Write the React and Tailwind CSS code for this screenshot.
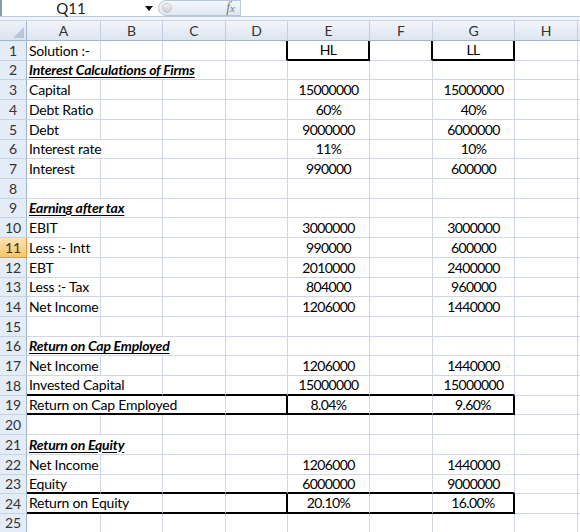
import React from 'react';

const COL_LETTERS = ['A', 'B', 'C', 'D', 'E', 'F', 'G', 'H', ''];
const COL_W = ['w-[74px]', 'w-[62px]', 'w-[63px]', 'w-[62px]', 'w-[82px]', 'w-[63px]', 'w-[82px]', 'w-[63px]', 'w-[63px]'];
const SPAN_W = { 1: 'w-[74px]', 2: 'w-[136px]', 3: 'w-[199px]' };
const ROW_H = [
  'h-[20px]', 'h-[19px]', 'h-[20px]', 'h-[20px]', 'h-[20px]', 'h-[19px]', 'h-[20px]', 'h-[20px]',
  'h-[19px]', 'h-[20px]', 'h-[20px]', 'h-[20px]', 'h-[19px]', 'h-[20px]', 'h-[20px]', 'h-[19px]',
  'h-[20px]', 'h-[20px]', 'h-[19px]', 'h-[20px]', 'h-[20px]', 'h-[20px]', 'h-[19px]', 'h-[20px]',
  'h-[19px]',
];

const rows = [
  { a: 'Solution :-', e: 'HL', g: 'LL' },
  { a: 'Interest Calculations of Firms', head: true, span: 3 },
  { a: 'Capital', e: '15000000', g: '15000000' },
  { a: 'Debt Ratio', e: '60%', g: '40%' },
  { a: 'Debt', e: '9000000', g: '6000000' },
  { a: 'Interest rate', e: '11%', g: '10%', span: 2 },
  { a: 'Interest', e: '990000', g: '600000' },
  {},
  { a: 'Earning after tax', head: true, span: 2 },
  { a: 'EBIT', e: '3000000', g: '3000000' },
  { a: 'Less :- Intt', e: '990000', g: '600000' },
  { a: 'EBT', e: '2010000', g: '2400000' },
  { a: 'Less :- Tax', e: '804000', g: '960000' },
  { a: 'Net Income', e: '1206000', g: '1440000' },
  {},
  { a: 'Return on Cap Employed', head: true, span: 3 },
  { a: 'Net Income', e: '1206000', g: '1440000' },
  { a: 'Invested Capital', e: '15000000', g: '15000000', span: 2 },
  { a: 'Return on Cap Employed', e: '8.04%', g: '9.60%', span: 3 },
  {},
  { a: 'Return on Equity', head: true, span: 2 },
  { a: 'Net Income', e: '1206000', g: '1440000' },
  { a: 'Equity', e: '6000000', g: '9000000' },
  { a: 'Return on Equity', e: '20.10%', g: '16.00%', span: 2 },
  {},
];

// thick lines of the boxed result rows
const thickBottom = (r, c) => {
  if ([18, 19, 23, 24].includes(r) && c <= 6) return true;
  if (r === 1 && (c === 4 || c === 6)) return true;
  return false;
};
const thickRight = (r, c) => {
  if ((r === 19 || r === 24) && (c === 3 || c === 6)) return true;
  if (r === 1 && c >= 3 && c <= 6) return true;
  return false;
};

const Cell = ({ w, r, c, children, center, head }) => (
  <div
    className={[
      'shrink-0 flex items-center whitespace-nowrap overflow-hidden',
      w,
      thickRight(r, c) ? 'border-r-2 border-r-black' : 'border-r border-r-[#d0d7e5]',
      thickBottom(r, c) ? 'border-b-2 border-b-black' : 'border-b border-b-[#d0d7e5]',
      center ? 'justify-center' : 'pl-[2px] tracking-[-0.2px]',
      head ? 'font-bold italic underline underline-offset-[2px]' : '',
    ].join(' ')}
  >
    {children}
  </div>
);

const Row = ({ data, r }) => {
  const span = data.span || 1;
  const cells = [];
  cells.push(
    <Cell key="a" w={SPAN_W[span]} r={r} c={span - 1} head={data.head}>
      {data.a}
    </Cell>
  );
  for (let c = span; c < COL_W.length; c++) {
    let v = null;
    if (c === 4) v = data.e;
    if (c === 6) v = data.g;
    cells.push(
      <Cell key={c} w={COL_W[c]} r={r} c={c} center>
        {v && <span className="tracking-[-0.6px]">{v}</span>}
      </Cell>
    );
  }
  const active = r === 11;
  return (
    <div className={`flex ${ROW_H[r - 1]}`}>
      <div
        className={
          active
            ? 'shrink-0 w-[27px] flex items-center justify-center bg-linear-to-b from-[#fbe3b3] to-[#f7c766] border-r border-r-[#f29436] border-b border-b-[#f29436] text-[#333]'
            : 'shrink-0 w-[27px] flex items-center justify-center bg-[#e4ecf7] border-r border-r-[#9eb6ce] border-b border-b-[#c5d3e3] text-[#333]'
        }
      >
        {r}
      </div>
      {cells}
    </div>
  );
};

export default function App() {
  return (
    <div
      className="w-[580px] h-[532px] overflow-hidden bg-white text-[14px] text-black leading-none"
      style={{ fontFamily: 'Lato, "Liberation Sans", sans-serif' }}
    >
      {/* formula bar */}
      <div className="flex h-[16px] items-center border-l-2 border-l-[#8a9bb3]">
        <div className="w-[138px] flex justify-center text-[15px] text-[#222]">Q11</div>
        <div className="w-[18px] flex justify-center">
          <svg width="8" height="5" viewBox="0 0 8 5"><path d="M0 0h8L4 5z" fill="#111" /></svg>
        </div>
        <div className="w-[83px] h-[16px] flex items-center justify-between rounded-l-full border border-[#b4c6de] bg-linear-to-b from-[#f4f7fb] to-[#dfe7f2] pl-[3px] pr-[5px]">
          <div className="w-[10px] h-[10px] rounded-full bg-linear-to-b from-[#f6f6f6] to-[#c9ccd1] border border-[#c2c7cf]" />
          <span className="italic text-[14px] text-[#777]" style={{ fontFamily: '"Liberation Serif", serif' }}>
            f<span className="text-[11px]">x</span>
          </span>
        </div>
        <div className="flex-1 h-[16px] bg-white" />
      </div>
      <div className="h-[5px] border-t border-t-[#b9c9dd] bg-[#f1f5fa] border-b border-b-[#c8d5e6]" />

      {/* column headers */}
      <div className="flex h-[20px] text-[#333]">
        <div className="shrink-0 w-[27px] flex items-end justify-end p-[2px] bg-linear-to-b from-[#eef2f8] to-[#dbe3ee] border-r border-r-[#9eb6ce] border-b border-b-[#9eb6ce]">
          <svg width="11" height="11" viewBox="0 0 11 11"><path d="M11 0V11H0z" fill="#b9c6d6" /></svg>
        </div>
        {COL_LETTERS.map((l, i) => (
          <div
            key={i}
            className={`shrink-0 ${COL_W[i]} flex items-center justify-center bg-linear-to-b from-[#f2f5fa] to-[#dde5f0] border-r border-r-[#c0cee0] border-b border-b-[#9eb6ce]`}
          >
            {l}
          </div>
        ))}
      </div>

      {rows.map((d, i) => (
        <Row key={i} data={d} r={i + 1} />
      ))}
    </div>
  );
}
